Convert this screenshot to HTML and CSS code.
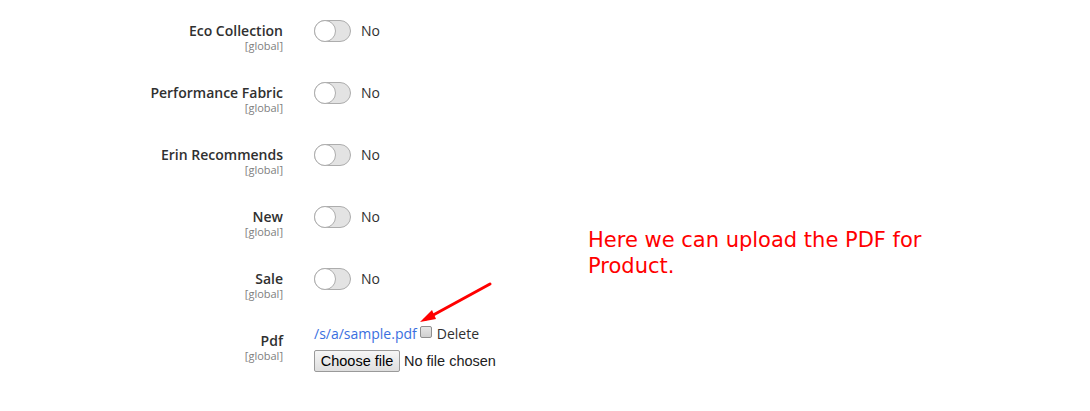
FILE: index.html
```html
<!DOCTYPE html>
<html>
<head>
<meta charset="utf-8">
<link rel="stylesheet" href="styles.css">
</head>
<body>
<div class="page">
  <div class="form">
    <div class="row">
      <div class="label"><div class="title">Eco Collection</div><div class="scope">[global]</div></div>
      <div class="control toggle-ctl"><span class="toggle"><span class="knob"></span></span><span class="val">No</span></div>
    </div>
    <div class="row">
      <div class="label"><div class="title">Performance Fabric</div><div class="scope">[global]</div></div>
      <div class="control toggle-ctl"><span class="toggle"><span class="knob"></span></span><span class="val">No</span></div>
    </div>
    <div class="row">
      <div class="label"><div class="title">Erin Recommends</div><div class="scope">[global]</div></div>
      <div class="control toggle-ctl"><span class="toggle"><span class="knob"></span></span><span class="val">No</span></div>
    </div>
    <div class="row">
      <div class="label"><div class="title">New</div><div class="scope">[global]</div></div>
      <div class="control toggle-ctl"><span class="toggle"><span class="knob"></span></span><span class="val">No</span></div>
    </div>
    <div class="row">
      <div class="label"><div class="title">Sale</div><div class="scope">[global]</div></div>
      <div class="control toggle-ctl"><span class="toggle"><span class="knob"></span></span><span class="val">No</span></div>
    </div>
    <div class="row">
      <div class="label"><div class="title">Pdf</div><div class="scope">[global]</div></div>
      <div class="control file-ctl">
        <div class="file-line"><a class="link" href="#">/s/a/sample.pdf</a><span class="chk"></span><span class="del">Delete</span></div>
        <div class="upload-line"><span class="btn">Choose file</span><span class="nofile">No file chosen</span></div>
      </div>
    </div>
  </div>
  <div class="note">Here we can upload the PDF for<br>Product.</div>
  <svg class="arrow" width="80" height="50" viewBox="0 0 80 50">
    <line x1="75" y1="4" x2="10" y2="39.5" stroke="#f00" stroke-width="3" stroke-linecap="round"/>
    <polygon points="5,42 17,30 21,39" fill="#f00"/>
  </svg>
</div>
</body>
</html>
```

FILE: styles.css
```css
html, body {
  margin: 0;
  padding: 0;
  background: #fff;
}
.page {
  position: relative;
  width: 1090px;
  height: 411px;
  font-family: "Open Sans", "Liberation Sans", sans-serif;
  color: #303030;
}
.form {
  display: flex;
  flex-direction: column;
  padding-top: 14px;
}
.row {
  display: flex;
  height: 62px;
  gap: 31px;
}
.label {
  width: 283px;
  text-align: right;
  padding-top: 8px;
  box-sizing: border-box;
}
.title {
  font-size: 14px;
  font-weight: 600;
  line-height: 18px;
  color: #303030;
}
.scope {
  font-size: 11px;
  line-height: 12px;
  color: #808080;
}
.toggle-ctl {
  display: flex;
  align-items: center;
  height: 22px;
  margin-top: 6px;
}
.toggle {
  position: relative;
  display: inline-block;
  width: 37px;
  height: 22px;
  box-sizing: border-box;
  border: 1px solid #adadad;
  border-radius: 12px;
  background: #e3e3e3;
}
.knob {
  position: absolute;
  left: -1px;
  top: -1px;
  width: 22px;
  height: 22px;
  box-sizing: border-box;
  border: 1px solid #adadad;
  border-radius: 50%;
  background: #fff;
}
.val {
  margin-left: 10px;
  font-size: 14px;
  line-height: 18px;
  padding-bottom: 1px;
  color: #303030;
}
.file-ctl {
  display: flex;
  flex-direction: column;
  margin-top: -1px;
}
.file-line {
  display: flex;
  align-items: center;
  height: 20px;
  font-size: 14px;
}
.link {
  color: #3a6fe0;
  text-decoration: none;
}
.chk {
  display: inline-block;
  width: 12px;
  height: 12px;
  box-sizing: border-box;
  margin: 0 5px 2px 3px;
  border: 1px solid #8f8f8f;
  border-radius: 2px;
  background: linear-gradient(#e6e6e6, #d0d0d0);
}
.del {
  color: #303030;
}
.upload-line {
  display: flex;
  align-items: center;
  margin-top: 7px;
  font-family: "Liberation Sans", Arial, sans-serif;
  font-size: 14.5px;
  color: #222;
}
.btn {
  display: inline-flex;
  align-items: center;
  justify-content: center;
  width: 86px;
  height: 22px;
  box-sizing: border-box;
  border: 1px solid #9a9a9a;
  border-radius: 2px;
  background: linear-gradient(#f6f6f6, #dedede);
  color: #000;
}
.nofile {
  margin-left: 4px;
}
.note {
  position: absolute;
  left: 588px;
  top: 227px;
  font-family: "DejaVu Sans", sans-serif;
  font-size: 21px;
  line-height: 26px;
  color: #f00;
}
.arrow {
  position: absolute;
  left: 415px;
  top: 280px;
}
```
